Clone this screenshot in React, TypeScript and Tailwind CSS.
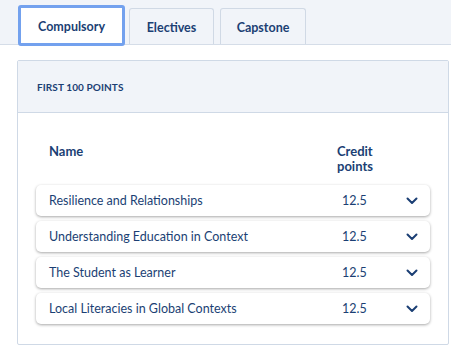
import React from 'react'

const courses = [
  'Resilience and Relationships',
  'Understanding Education in Context',
  'The Student as Learner',
  'Local Literacies in Global Contexts',
]

function Chevron() {
  return (
    <svg width="12" height="8" viewBox="0 0 12 8" fill="none">
      <path d="M1.5 1.5L6 6L10.5 1.5" stroke="#1b3f74" strokeWidth="2" strokeLinecap="round" strokeLinejoin="round" />
    </svg>
  )
}

export default function App() {
  return (
    <div className="w-[451px] h-[351px] bg-white text-[#1b3f74] overflow-hidden" style={{ fontFamily: 'Lato, "Open Sans", sans-serif' }}>
      <div className="h-[45px] bg-[#f1f4f9] border-b border-[#d5dde8] flex items-end pl-[18px] gap-[3px]">
        <button className="w-[107px] h-[41px] mb-[-2px] bg-white border-[3px] border-[#73a1ee] rounded-[3px] text-[12.5px] font-bold flex items-center justify-center pt-[3px]">
          Compulsory
        </button>
        <button className="w-[85px] h-[36px] ml-[1px] bg-[#f1f4f9] border border-[#d0d9e5] border-b-0 rounded-t-[3px] text-[12.5px] font-bold flex items-center justify-center pt-[3px]">
          Electives
        </button>
        <button className="w-[86px] h-[36px] ml-[3px] bg-[#f1f4f9] border border-[#d0d9e5] border-b-0 rounded-t-[3px] text-[12.5px] font-bold flex items-center justify-center pt-[3px]">
          Capstone
        </button>
      </div>
      <div className="mt-[15px] ml-[17px] w-[432px] h-[285px] border border-[#cfd9e6] rounded-[2px]">
        <div className="h-[52px] bg-[#f1f4f9] border-b border-[#cfd9e6] flex items-center pl-[19px] pt-[2px] text-[10px] font-bold tracking-[0.1px]">
          FIRST 100 POINTS
        </div>
        <div className="px-[18px] pt-[31px]">
          <div className="flex text-[13px] font-bold leading-[15px] px-[13px]">
            <div className="flex-1">Name</div>
            <div className="w-[80px]">Credit<br />points</div>
          </div>
          <div className="mt-[11px] flex flex-col gap-[5px] w-[394px]">
            {courses.map((c) => (
              <div key={c} className="h-[31px] bg-white rounded-[5px] shadow-[0_1px_3px_rgba(0,0,0,0.35)] flex items-center pl-[13px] pr-[12px] text-[12.5px] leading-[16px]">
                <div className="flex-1">{c}</div>
                <div className="w-[64px]">12.5</div>
                <Chevron />
              </div>
            ))}
          </div>
        </div>
      </div>
    </div>
  )
}
